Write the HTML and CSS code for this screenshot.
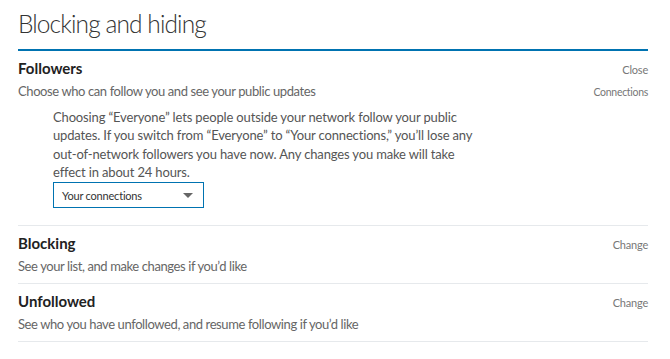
FILE: index.html
```html
<!DOCTYPE html>
<html lang="en">
<head>
    <meta charset="UTF-8">
    <title>Blocking and hiding</title>
    <link rel="stylesheet" href="styles.css">
</head>
<body>
    <div class="page">
        <h1 class="page-title">Blocking and hiding</h1>

        <!-- Followers (expanded) -->
        <div class="setting">
            <div class="setting-head">
                <h3>Followers</h3>
                <a class="action" href="#">Close</a>
            </div>
            <div class="setting-sub">
                <p class="desc">Choose who can follow you and see your public updates</p>
                <span class="current">Connections</span>
            </div>
            <div class="setting-body">
                <p class="note">Choosing “Everyone” lets people outside your network follow your public<br>
                    updates. If you switch from “Everyone” to “Your connections,” you’ll lose any<br>
                    out-of-network followers you have now. Any changes you make will take<br>
                    effect in about 24 hours.</p>
                <div class="select">
                    <span>Your connections</span>
                    <span class="caret"></span>
                </div>
            </div>
        </div>

        <div class="setting">
            <div class="setting-head">
                <h3>Blocking</h3>
                <a class="action" href="#">Change</a>
            </div>
            <p class="desc">See your list, and make changes if you’d like</p>
        </div>

        <div class="setting">
            <div class="setting-head">
                <h3>Unfollowed</h3>
                <a class="action" href="#">Change</a>
            </div>
            <p class="desc">See who you have unfollowed, and resume following if you’d like</p>
        </div>
    </div>
</body>
</html>
```
FILE: styles.css
```css
body {
    margin: 0;
    background: #fff;
    font-family: Lato, "Noto Sans", sans-serif;
    color: #333;
}
.page {
    padding: 0 22px 0 18px;
}
.page-title {
    margin: 0;
    padding: 9px 0 10px;
    font-size: 24.5px;
    font-weight: 300;
    letter-spacing: -0.9px;
    color: #333;
    line-height: 30px;
    border-bottom: 2px solid #0073b1;
}
.setting {
    border-bottom: 1px solid #e6e9ec;
    padding: 7px 0 8px;
}
.setting-head {
    display: flex;
    justify-content: space-between;
    align-items: baseline;
}
.setting-head h3 {
    margin: 0;
    font-size: 15px;
    font-weight: 700;
    line-height: 20px;
    color: #222;
}
.action {
    font-size: 11px;
    letter-spacing: -0.2px;
    color: #777;
    text-decoration: none;
}
.setting-sub {
    display: flex;
    justify-content: space-between;
    align-items: baseline;
}
.desc {
    margin: 4px 0 0;
    font-size: 13px;
    letter-spacing: -0.4px;
    line-height: 18px;
    color: #666;
}
.current {
    font-size: 10.5px;
    letter-spacing: -0.3px;
    color: #777;
}
.setting-body {
    padding: 8px 0 9px 35px;
}
.note {
    margin: 0;
    font-size: 13px;
    letter-spacing: -0.15px;
    line-height: 18.3px;
    color: #555;
}
.select {
    display: flex;
    justify-content: space-between;
    align-items: center;
    width: 151px;
    height: 26px;
    margin-top: 1px;
    padding: 0 8px;
    box-sizing: border-box;
    border: 1px solid #0073b1;
    font-size: 11px;
    letter-spacing: -0.2px;
    color: #333;
}
.caret {
    border-left: 5px solid transparent;
    border-right: 5px solid transparent;
    border-top: 5px solid #666;
    margin-right: 2px;
}
```
